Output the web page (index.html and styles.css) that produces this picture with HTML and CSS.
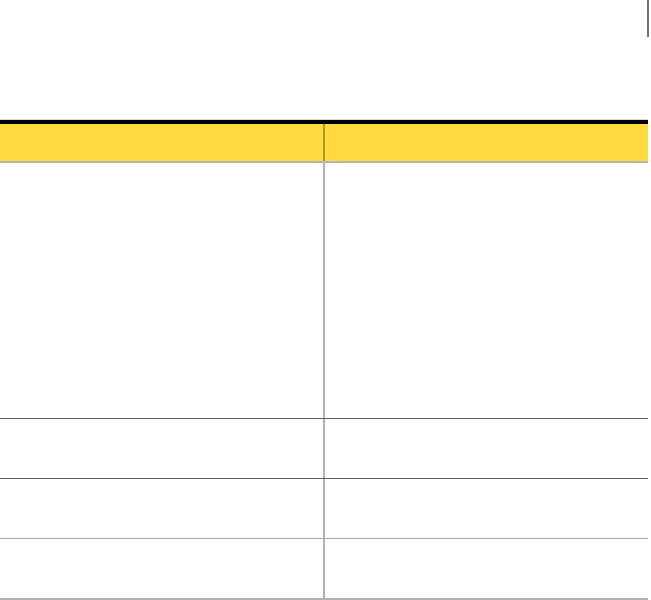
FILE: index.html
```html
<!DOCTYPE html>
<html>
<head>
<meta charset="utf-8">
<link rel="stylesheet" href="styles.css">
</head>
<body>
<div class="page">
  <div class="topmark"></div>
  <div class="gap"></div>
  <div class="table">
    <div class="row head">
      <div class="cell left"></div>
      <div class="cell right"></div>
    </div>
    <div class="row body tall dark">
      <div class="cell left"></div>
      <div class="cell right"></div>
    </div>
    <div class="row body dark">
      <div class="cell left"></div>
      <div class="cell right"></div>
    </div>
    <div class="row body light">
      <div class="cell left"></div>
      <div class="cell right"></div>
    </div>
    <div class="row body light last">
      <div class="cell left"></div>
      <div class="cell right"></div>
    </div>
  </div>
</div>
</body>
</html>
```
FILE: styles.css
```css
html, body {
  margin: 0;
  padding: 0;
  background: #ffffff;
  font-family: "Liberation Sans", Arial, sans-serif;
}

.page {
  width: 651px;
}

.topmark {
  width: 647px;
  height: 37px;
  border-right: 2px solid #707070;
}

.gap {
  height: 83px;
  width: 648px;
  border-bottom: 1px solid #dcdcdc;
  box-sizing: border-box;
}

.table {
  width: 648px;
  border-top: 4px solid #000000;
}

.row {
  display: grid;
  grid-template-columns: 325px 323px;
}

.cell.left {
  border-right: 2px solid rgba(0, 0, 0, 0.3);
}

.head {
  height: 37px;
  background: #fed93f;
  border-bottom: 2px solid #b6b6b6;
}

.body {
  height: 59px;
}

.body.tall {
  height: 255px;
}

.dark {
  border-bottom: 1px solid #5a5a5a;
}

.light {
  border-bottom: 1px solid #a8a8a8;
}

.last {
  border-bottom: 2px solid #b0b0b0;
}
```
